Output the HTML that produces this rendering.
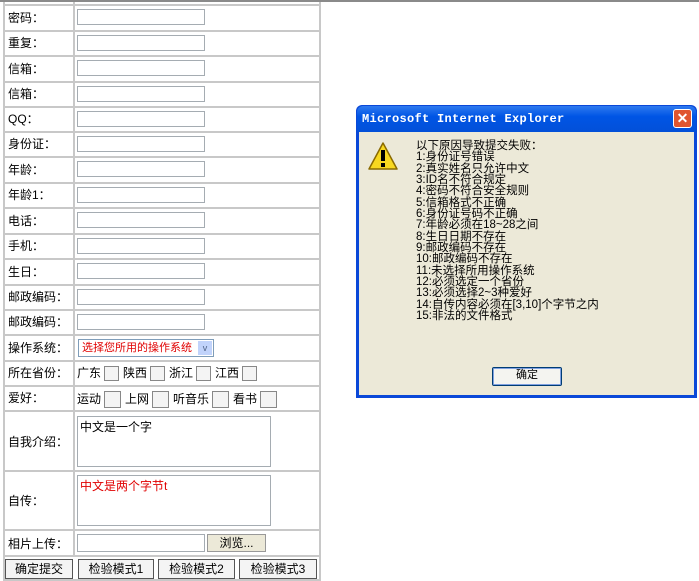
<!DOCTYPE html>
<html><head><meta charset="utf-8"><style>
body{margin:0;width:699px;height:581px;background:#fff;position:relative;overflow:hidden;font-family:"Liberation Sans","SimSun","Noto Sans CJK SC",sans-serif;font-size:12px;color:#000}
.a{position:absolute}
.hl{position:absolute;left:4px;width:317px;height:2px;background:#c8c8c8}
.lab{position:absolute;left:8px;font-size:12px;line-height:14px}
.in{position:absolute;left:77px;width:126px;height:14px;border:1px solid #a5acb2;background:#fff}
.rb{display:inline-block;width:15px;height:15px;border:1px solid #888;background:#f4f4f4;vertical-align:middle;margin:0 4px 0 3px;box-sizing:border-box}
.btn{position:absolute;top:559px;height:20px;border:1px solid #555;background:#f4f4f4;box-sizing:border-box;text-align:center;line-height:18px;font-size:12px}
</style></head><body>
<div class="a" style="left:0;top:0;width:699px;height:2px;background:#8a8a8a"></div>
<div class="a" style="left:3px;top:2px;width:2px;height:579px;background:#c8c8c8"></div>
<div class="a" style="left:73px;top:2px;width:2px;height:555px;background:#c8c8c8"></div>
<div class="a" style="left:319px;top:2px;width:2px;height:579px;background:#c8c8c8"></div>
<div class="hl" style="top:4px"></div><div class="hl" style="top:30px"></div><div class="hl" style="top:55px"></div><div class="hl" style="top:81px"></div><div class="hl" style="top:106px"></div><div class="hl" style="top:131px"></div><div class="hl" style="top:156px"></div><div class="hl" style="top:182px"></div><div class="hl" style="top:207px"></div><div class="hl" style="top:233px"></div><div class="hl" style="top:258px"></div><div class="hl" style="top:284px"></div><div class="hl" style="top:309px"></div><div class="hl" style="top:334px"></div><div class="hl" style="top:360px"></div><div class="hl" style="top:385px"></div><div class="hl" style="top:410px"></div><div class="hl" style="top:470px"></div><div class="hl" style="top:529px"></div><div class="hl" style="top:555px"></div><div class="hl" style="top:579px"></div>
<div class="lab" style="top:11px">密码：</div><div class="in" style="top:9px"></div>
<div class="lab" style="top:36px">重复：</div><div class="in" style="top:35px"></div>
<div class="lab" style="top:62px">信箱：</div><div class="in" style="top:60px"></div>
<div class="lab" style="top:87px">信箱：</div><div class="in" style="top:86px"></div>
<div class="lab" style="top:112px">QQ：</div><div class="in" style="top:111px"></div>
<div class="lab" style="top:137px">身份证：</div><div class="in" style="top:136px"></div>
<div class="lab" style="top:163px">年龄：</div><div class="in" style="top:161px"></div>
<div class="lab" style="top:188px">年龄1：</div><div class="in" style="top:187px"></div>
<div class="lab" style="top:214px">电话：</div><div class="in" style="top:212px"></div>
<div class="lab" style="top:239px">手机：</div><div class="in" style="top:238px"></div>
<div class="lab" style="top:265px">生日：</div><div class="in" style="top:263px"></div>
<div class="lab" style="top:290px">邮政编码：</div><div class="in" style="top:289px"></div>
<div class="lab" style="top:315px">邮政编码：</div><div class="in" style="top:314px"></div>
<div class="lab" style="top:341px">操作系统：</div>
<div class="a" style="left:78px;top:339px;width:136px;height:18px;border:1px solid #7f9db9;box-sizing:border-box;color:#e00000;line-height:16px;padding-left:3px;font-size:11px;white-space:nowrap">选择您所用的操作系统<span class="a" style="right:1px;top:1px;width:14px;height:14px;background:#c1d3fb;color:#4d6185;font-size:9px;line-height:14px;text-align:center">v</span></div>
<div class="lab" style="top:366px">所在省份：</div>
<div class="a" style="left:77px;top:365px;line-height:16px">广东<span class="rb"></span>陕西<span class="rb"></span>浙江<span class="rb"></span>江西<span class="rb"></span></div>
<div class="lab" style="top:391px">爱好：</div>
<div class="a" style="left:77px;top:390px;line-height:18px">运动<span class="rb" style="width:17px;height:17px"></span>上网<span class="rb" style="width:17px;height:17px"></span>听音乐<span class="rb" style="width:17px;height:17px"></span>看书<span class="rb" style="width:17px;height:17px"></span></div>
<div class="lab" style="top:435px">自我介绍：</div>
<div class="a" style="left:77px;top:416px;width:194px;height:51px;border:1px solid #a5acb2;box-sizing:border-box;padding:1px 2px">中文是一个字</div>
<div class="lab" style="top:494px">自传：</div>
<div class="a" style="left:77px;top:475px;width:194px;height:51px;border:1px solid #a5acb2;box-sizing:border-box;padding:1px 2px;color:#e00000">中文是两个字节t</div>
<div class="lab" style="top:537px">相片上传：</div>
<div class="a" style="left:77px;top:534px;width:128px;height:18px;border:1px solid #a5acb2;box-sizing:border-box"></div>
<div class="a" style="left:207px;top:534px;width:59px;height:18px;background:#ece9d8;border:1px solid #999;box-sizing:border-box;text-align:center;line-height:16px">浏览...</div>
<div class="btn" style="left:5px;width:68px">确定提交</div>
<div class="btn" style="left:78px;width:76px">检验模式1</div>
<div class="btn" style="left:158px;width:77px">检验模式2</div>
<div class="btn" style="left:239px;width:78px">检验模式3</div>

<div class="a" style="left:356px;top:105px;width:341px;height:293px;background:#0a48d8;border-radius:6px 6px 0 0"></div>
<div class="a" style="left:357px;top:106px;width:339px;height:26px;background:linear-gradient(#2f7af0,#0055e5 40%,#0350d8);border-radius:6px 6px 0 0"></div>
<div class="a" style="left:362px;top:112px;color:#fff;font-family:'Liberation Mono',monospace;font-weight:bold;font-size:12px;letter-spacing:0.3px">Microsoft Internet Explorer</div>
<div class="a" style="left:673px;top:109px;width:19px;height:19px;background:#e0552f;border:1px solid #fff;border-radius:3px;box-sizing:border-box;color:#fff;font-weight:bold;text-align:center;line-height:16px;font-size:14px">✕</div>
<div class="a" style="left:359px;top:132px;width:335px;height:263px;background:#ece9d8"></div>
<svg class="a" style="left:367px;top:141px" width="32" height="32"><polygon points="16,2 30,28 2,28" fill="#f8d820" stroke="#8a6a00" stroke-width="1.5" stroke-linejoin="round"/><rect x="14" y="9" width="4" height="11" fill="#000"/><rect x="14" y="22" width="4" height="4" fill="#000"/></svg>
<div class="a" style="left:416px;top:141px;font-size:11.5px;line-height:11.35px;font-family:'Liberation Sans','SimSun','Noto Sans CJK SC',sans-serif">以下原因导致提交失败：<br>1:身份证号错误<br>2:真实姓名只允许中文<br>3:ID名不符合规定<br>4:密码不符合安全规则<br>5:信箱格式不正确<br>6:身份证号码不正确<br>7:年龄必须在18~28之间<br>8:生日日期不存在<br>9:邮政编码不存在<br>10:邮政编码不存在<br>11:未选择所用操作系统<br>12:必须选定一个省份<br>13:必须选择2~3种爱好<br>14:自传内容必须在[3,10]个字节之内<br>15:非法的文件格式</div>
<div class="a" style="left:492px;top:367px;width:68px;height:17px;border:1px solid #003c74;border-radius:2px;background:#f4f4f0;box-shadow:inset 0 0 0 1px #7fa0e0;text-align:center;line-height:15px;font-size:11px">确定</div>
</body></html>
